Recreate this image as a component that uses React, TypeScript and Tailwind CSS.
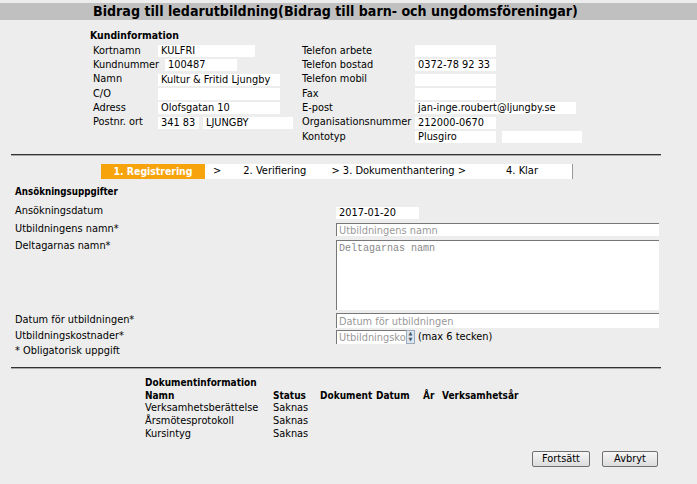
import React from "react";

const body = "font-['DejaVu_Sans',Verdana,sans-serif] text-[9.8px] text-black";
const tahoma = "font-['DejaVu_Sans_Condensed',Tahoma,sans-serif]";

function Box({ w, children, ml = "" }: { w: string; children?: React.ReactNode; ml?: string }) {
  return (
    <div className={`h-[12px] bg-white pl-[3px] leading-[12px] whitespace-nowrap overflow-hidden ${w} ${ml}`}>
      {children}
    </div>
  );
}

function Row({ label, children, lw }: { label: string; children?: React.ReactNode; lw: string }) {
  return (
    <div className="flex h-[14.3px] items-center">
      <div className={`${lw} shrink-0 whitespace-nowrap`}>{label}</div>
      {children}
    </div>
  );
}

const tabs = ["2. Verifiering", "3. Dokumenthantering", "4. Klar"];

export default function App() {
  return (
    <div className={`min-h-[484px] w-[697px] bg-[#ededed] pt-[3px] ${body}`}>
      <div className="flex h-[17px] items-center bg-[#c0c0c0] pl-[93px]">
        <h1 className={`${tahoma} text-[14.1px] font-bold leading-none`}>
          Bidrag till ledarutbildning(Bidrag till barn- och ungdomsföreningar)
        </h1>
      </div>

      <div className="pl-[93px] pt-[9px]">
        <div className={`${tahoma} -ml-[3px] text-[10.4px] font-bold leading-[12px]`}>Kundinformation</div>
        <div className="mt-[3px] flex">
          <div className="w-[209px]">
            <Row label="Kortnamn" lw="w-[65px]"><Box w="w-[97px]">KULFRI</Box></Row>
            <Row label="Kundnummer" lw="w-[65px]"><Box w="w-[72px]" ml="ml-[7px]">100487</Box></Row>
            <Row label="Namn" lw="w-[65px]"><Box w="w-[122px]">Kultur &amp; Fritid Ljungby</Box></Row>
            <Row label="C/O" lw="w-[65px]"><Box w="w-[122px]" /></Row>
            <Row label="Adress" lw="w-[65px]"><Box w="w-[122px]">Olofsgatan 10</Box></Row>
            <Row label="Postnr. ort" lw="w-[65px]">
              <Box w="w-[41px]">341 83</Box>
              <Box w="w-[90px]" ml="ml-[4px]">LJUNGBY</Box>
            </Row>
          </div>
          <div>
            <Row label="Telefon arbete" lw="w-[113px]"><Box w="w-[81px]" /></Row>
            <Row label="Telefon bostad" lw="w-[113px]"><Box w="w-[81px]">0372-78 92 33</Box></Row>
            <Row label="Telefon mobil" lw="w-[113px]"><Box w="w-[81px]" /></Row>
            <Row label="Fax" lw="w-[113px]"><Box w="w-[81px]" /></Row>
            <Row label="E-post" lw="w-[113px]"><Box w="w-[161px]">jan-inge.roubert@ljungby.se</Box></Row>
            <Row label="Organisationsnummer" lw="w-[113px]"><Box w="w-[81px]">212000-0670</Box></Row>
            <Row label="Kontotyp" lw="w-[113px]">
              <Box w="w-[81px]">Plusgiro</Box>
              <Box w="w-[80px]" ml="ml-[6px]" />
            </Row>
          </div>
        </div>
      </div>

      <div className="ml-[11px] mt-[10px] h-[2px] w-[650px] border-t border-[#333] bg-[#aaa]" />

      <div className={`${tahoma} ml-[101px] mt-[8px] flex h-[15px] w-[472px] items-center border-r border-[#999] bg-white text-[11px]`}>
        <div className="flex h-full w-[104px] items-center justify-center bg-[#f7a30c] text-[10.4px] font-bold text-white">
          1. Registrering
        </div>
        <div className="ml-[8px]">&gt;</div>
        <div className="ml-[22px]">{tabs[0]}</div>
        <div className="ml-[25px]">&gt; {tabs[1]} &gt;</div>
        <div className="ml-[40px]">{tabs[2]}</div>
      </div>

      <div className="px-[15px]">
        <div className={`${tahoma} mt-[7px] text-[9.7px] font-bold leading-[12px]`}>Ansökningsuppgifter</div>
        <div className="mt-[7px] grid grid-cols-[321px_323px] leading-[12px]">
          <div className="h-[18px]">Ansökningsdatum</div>
          <div className="h-[18px] pt-[2px]">
            <div className="h-[12px] w-[83px] bg-white pl-[3px]">2017-01-20</div>
          </div>

          <div className="h-[17px]">Utbildningens namn*</div>
          <div className="h-[17px]">
            <input
              readOnly
              placeholder="Utbildningens namn"
              className="block h-[13px] w-[323px] border-l border-t border-[#777] bg-white pl-[2px] text-[9.8px] leading-[12px] outline-none placeholder:text-[#999]"
            />
          </div>

          <div className="h-[73px]">Deltagarnas namn*</div>
          <div className="h-[73px]">
            <textarea
              readOnly
              placeholder="Deltagarnas namn"
              className="block h-[70px] w-[323px] resize-none border-l border-t border-[#777] bg-white px-[2px] pt-[2px] font-['Liberation_Mono',monospace] text-[10px] leading-[11px] outline-none placeholder:text-[#888]"
            />
          </div>

          <div className="h-[16px] pt-[1px]">Datum för utbildningen*</div>
          <div className="h-[16px]">
            <input
              readOnly
              placeholder="Datum för utbildningen"
              className="block h-[15px] w-[323px] border-l border-t border-[#777] bg-white pl-[2px] text-[9.8px] outline-none placeholder:text-[#999]"
            />
          </div>

          <div className="h-[15px] pt-[1px]">Utbildningskostnader*</div>
          <div className="flex h-[15px] items-center">
            <input
              readOnly
              placeholder="Utbildningskostnader"
              className="block h-[14px] w-[70px] border-l border-t border-[#777] bg-white pl-[2px] text-[9.8px] outline-none placeholder:text-[#999]"
            />
            <div className="flex h-[14px] w-[9px] flex-col border border-[#9ab] bg-[#dde6ee]">
              <div className="flex flex-1 items-center justify-center text-[5px] leading-none text-[#456]">▲</div>
              <div className="flex flex-1 items-center justify-center text-[5px] leading-none text-[#456]">▼</div>
            </div>
            <div className="ml-[3px]">(max 6 tecken)</div>
          </div>

          <div className="h-[12px] pt-[1px]">* Obligatorisk uppgift</div>
        </div>
      </div>

      <div className="ml-[11px] mt-[11px] h-[2px] w-[650px] border-t border-[#333] bg-[#aaa]" />

      <div className="ml-[145px] mt-[8px] leading-[12.7px]">
        <div className={`${tahoma} text-[10px] font-bold`}>Dokumentinformation</div>
        <div className="grid grid-cols-[128px_47px_56px_47px_19px_auto]">
          <div className={`${tahoma} text-[10px] font-bold`}>Namn</div>
          <div className={`${tahoma} text-[10px] font-bold`}>Status</div>
          <div className={`${tahoma} text-[10px] font-bold`}>Dokument</div>
          <div className={`${tahoma} text-[10px] font-bold`}>Datum</div>
          <div className={`${tahoma} text-[10px] font-bold`}>År</div>
          <div className={`${tahoma} text-[10px] font-bold`}>Verksamhetsår</div>
          {["Verksamhetsberättelse", "Årsmötesprotokoll", "Kursintyg"].map((n) => (
            <React.Fragment key={n}>
              <div>{n}</div>
              <div>Saknas</div>
              <div />
              <div />
              <div />
              <div />
            </React.Fragment>
          ))}
        </div>
      </div>

      <div className="mt-[10px] flex justify-end gap-[12px] pr-[39px] pb-[18px]">
        <button className="h-[16px] w-[58px] rounded-[2px] border border-[#707070] bg-gradient-to-b from-[#f6f6f6] to-[#dcdcdc] text-[9.8px] leading-[14px]">
          Fortsätt
        </button>
        <button className="h-[16px] w-[56px] rounded-[2px] border border-[#707070] bg-gradient-to-b from-[#f6f6f6] to-[#dcdcdc] text-[9.8px] leading-[14px]">
          Avbryt
        </button>
      </div>
    </div>
  );
}
